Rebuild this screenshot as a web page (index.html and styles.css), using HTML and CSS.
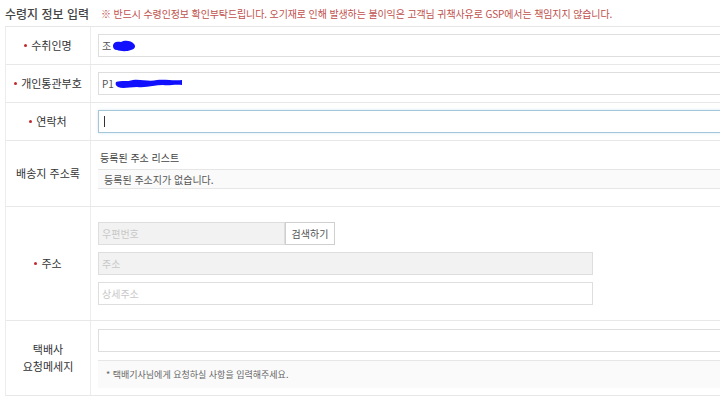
FILE: index.html
```html
<!DOCTYPE html>
<html lang="ko">
<head>
    <meta charset="UTF-8">
    <meta name="viewport" content="width=device-width, initial-scale=1.0">
    <title>수령지 정보 입력</title>
    <link rel="stylesheet" href="styles.css">
</head>
<body>
    <div class="wrap">
        <div class="head">
            <h2 class="title">수령지 정보 입력</h2>
            <span class="notice">※ 반드시 수령인정보 확인부탁드립니다. 오기재로 인해 발생하는 불이익은 고객님 귀책사유로 GSP에서는 책임지지 않습니다.</span>
        </div>

        <div class="form">
            <div class="row">
                <div class="label"><span class="req"></span>수취인명</div>
                <div class="cell">
                    <div class="field">
                        <span>조</span>
                        <svg class="mask" width="24" height="12" viewBox="0 0 24 12">
                            <path d="M1 6 C1 2 5 1 9 2 C12 0 19 0 22 4 C24 6 23 9 19 10 C14 12 8 11 5 10 C2 10 1 8 1 6 Z" fill="#1010ff"/>
                        </svg>
                    </div>
                </div>
            </div>

            <div class="row">
                <div class="label"><span class="req"></span>개인통관부호</div>
                <div class="cell">
                    <div class="field">
                        <span>P1</span>
                        <svg class="mask" width="68" height="14" viewBox="0 0 68 14">
                            <path d="M1 5 C6 3 12 5 18 3 C26 2 34 5 42 3 C50 2 58 4 67 3 L67 8 C60 7 54 9 48 8 C40 8 32 11 22 10 C14 10 8 12 3 10 C1 9 0 7 1 5 Z" fill="#1010ff"/>
                        </svg>
                    </div>
                </div>
            </div>

            <div class="row">
                <div class="label"><span class="req"></span>연락처</div>
                <div class="cell">
                    <div class="field focus"><span class="caret"></span></div>
                </div>
            </div>

            <div class="row">
                <div class="label">배송지 주소록</div>
                <div class="cell stack">
                    <div class="sub">등록된 주소 리스트</div>
                    <div class="list">등록된 주소지가 없습니다.</div>
                </div>
            </div>

            <div class="row">
                <div class="label"><span class="req"></span>주소</div>
                <div class="cell addr">
                    <div class="zip-line">
                        <div class="field short disabled">우편번호</div>
                        <a href="#" class="btn">검색하기</a>
                    </div>
                    <div class="field mid disabled">주소</div>
                    <div class="field mid ph">상세주소</div>
                </div>
            </div>

            <div class="row">
                <div class="label">택배사<br>요청메세지</div>
                <div class="cell msg">
                    <div class="field"></div>
                    <div class="hint">* 택배기사님에게 요청하실 사항을 입력해주세요.</div>
                </div>
            </div>
        </div>
    </div>
</body>
</html>
```

FILE: styles.css
```css
body {
    margin: 0;
    overflow: hidden;
    background: #fff;
    font-family: "Noto Sans CJK KR", "Noto Sans", sans-serif;
    color: #333;
}

.wrap {
    width: 780px;
    padding-left: 5px;
}

.head {
    display: flex;
    align-items: center;
    height: 26px;
}

.title {
    margin: 0 12px 0 0;
    font-size: 12px;
    font-weight: 500;
    color: #444;
}

.notice {
    font-size: 10px;
    letter-spacing: -0.12px;
    color: #c0504d;
}

.form {
    border-top: solid 1px #e6e6e6;
    border-left: solid 1px #ececec;
}

.row {
    display: flex;
    border-bottom: solid 1px #e8e8e8;
}

.label {
    width: 84px;
    flex-shrink: 0;
    border-right: solid 1px #ececec;
    display: flex;
    align-items: center;
    justify-content: center;
    text-align: center;
    font-size: 11px;
    line-height: 17px;
    color: #333;
}

.req {
    width: 3px;
    height: 3px;
    border-radius: 50%;
    background: #c0282d;
    margin-right: 4px;
}

.cell {
    flex: 1;
    padding: 7px 0 7px 7px;
}

.field {
    height: 21px;
    border: solid 1px #dedede;
    background: #fff;
    display: flex;
    align-items: center;
    padding-left: 3px;
    font-size: 10px;
    color: #555;
}

.mask {
    margin-left: 1px;
}

.focus {
    border-color: #a3c6da;
    box-shadow: 0 0 3px #d8e9f5;
}

.caret {
    width: 1px;
    height: 11px;
    margin-left: 2px;
    background: #333;
}

.stack {
    padding: 9px 0 17px 7px;
}

.sub {
    font-size: 10px;
    line-height: 16px;
    margin: 0 0 3px 2px;
    color: #444;
}

.list {
    height: 18px;
    border-top: solid 1px #e6e6e6;
    border-bottom: solid 1px #e6e6e6;
    background: #fafafa;
    padding-left: 6px;
    display: flex;
    align-items: center;
    font-size: 10px;
    color: #555;
}

.addr {
    padding: 15px 0 15px 7px;
    display: flex;
    flex-direction: column;
    gap: 7px;
}

.zip-line {
    display: flex;
}

.short {
    width: 182px;
}

.mid {
    width: 490px;
}

.disabled {
    background: #f2f2f2;
    color: #c8c8c8;
}

.ph {
    color: #c8c8c8;
}

.btn {
    width: 48px;
    height: 21px;
    border: solid 1px #cfcfcf;
    background: #fff;
    color: #555;
    font-size: 10px;
    text-decoration: none;
    display: flex;
    align-items: center;
    justify-content: center;
}

.msg {
    padding: 8px 0 7px 7px;
}

.hint {
    margin-top: 8px;
    height: 27px;
    border-top: solid 1px #e6e6e6;
    background: #fafafa;
    padding-left: 8px;
    display: flex;
    align-items: center;
    font-size: 9px;
    color: #666;
}
```
